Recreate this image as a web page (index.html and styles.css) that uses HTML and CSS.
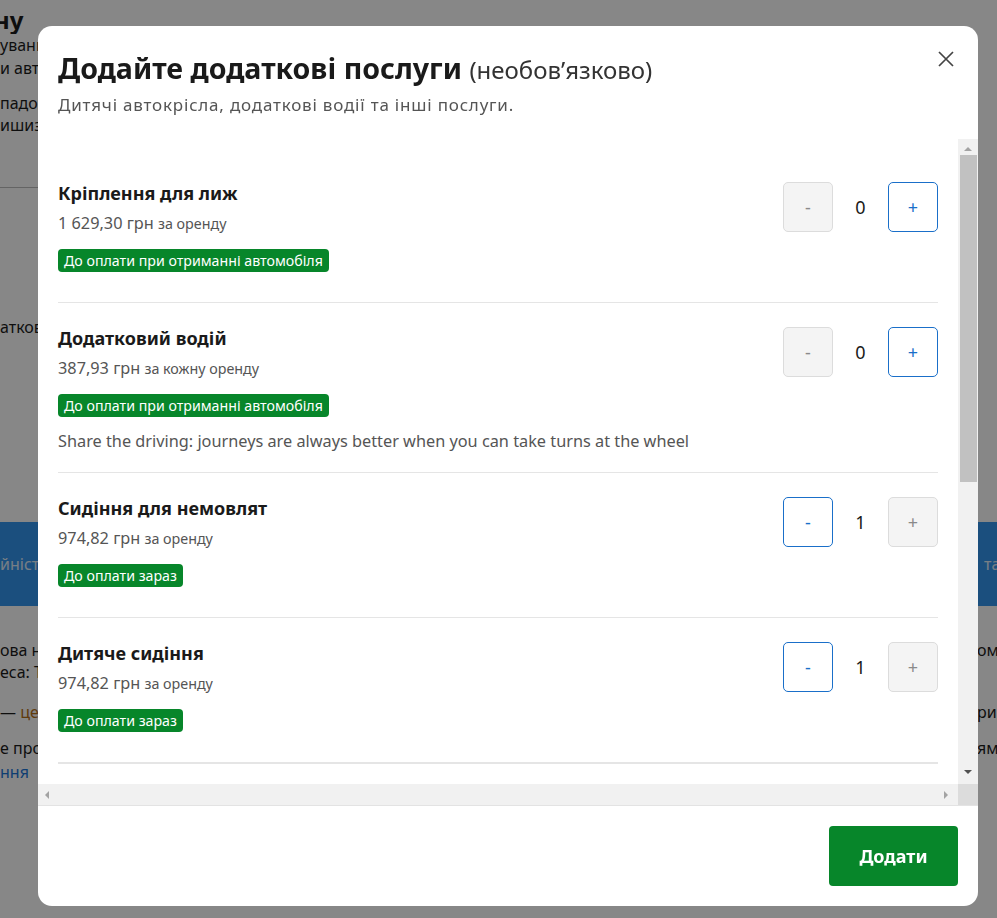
FILE: index.html
```html
<!DOCTYPE html>
<html lang="uk">
<head>
<meta charset="utf-8">
<title>Додаткові послуги</title>
<link rel="stylesheet" href="styles.css">
</head>
<body>
<div class="bg">
  <div class="bg-row bg-head"><div class="bg-l">ну</div><div class="bg-r"></div></div>
  <div class="bg-row bg-p1"><div class="bg-l">ування<br>и авто</div><div class="bg-r"></div></div>
  <div class="bg-row bg-p2"><div class="bg-l">падо<br>ишизо</div><div class="bg-r"></div></div>
  <div class="bg-hr"></div>
  <div class="bg-row bg-p3"><div class="bg-l">атков</div><div class="bg-r"></div></div>
  <div class="bg-row bg-band"><div class="bg-l">йніст</div><div class="bg-r bg-r-band">та</div></div>
  <div class="bg-row bg-p4"><div class="bg-l">ова н<br>еса: Т</div><div class="bg-r">оме</div></div>
  <div class="bg-row bg-p5"><div class="bg-l">— <span class="bg-accent">це</span></div><div class="bg-r">ри</div></div>
  <div class="bg-row bg-p6"><div class="bg-l">е про<br><span class="bg-link">ння</span></div><div class="bg-r">ямз</div></div>
</div>
<div class="overlay"></div>
<div class="modal" role="dialog">
  <div class="modal-head">
    <h2 class="modal-title">Додайте додаткові послуги <span class="opt">(необов’язково)</span></h2>
    <p class="modal-sub">Дитячі автокрісла, додаткові водії та інші послуги.</p>
    <button class="close" aria-label="Закрити">
      <svg width="16" height="16" viewBox="0 0 16 16"><path d="M1 1L15 15M15 1L1 15" stroke="#444" stroke-width="1.7" fill="none"/></svg>
    </button>
  </div>
  <div class="scroller">
    <div class="scroll-content">
      <div class="item">
        <div class="info">
          <div class="name">Кріплення для лиж</div>
          <div class="price">1 629,30 грн <small>за оренду</small></div>
          <span class="badge">До оплати при отриманні автомобіля</span>
        </div>
        <div class="stepper">
          <button class="step off">-</button><span class="count">0</span><button class="step on">+</button>
        </div>
      </div>
      <div class="item">
        <div class="info">
          <div class="name">Додатковий водій</div>
          <div class="price">387,93 грн <small>за кожну оренду</small></div>
          <span class="badge">До оплати при отриманні автомобіля</span>
          <p class="desc">Share the driving: journeys are always better when you can take turns at the wheel</p>
        </div>
        <div class="stepper">
          <button class="step off">-</button><span class="count">0</span><button class="step on">+</button>
        </div>
      </div>
      <div class="item">
        <div class="info">
          <div class="name">Сидіння для немовлят</div>
          <div class="price">974,82 грн <small>за оренду</small></div>
          <span class="badge">До оплати зараз</span>
        </div>
        <div class="stepper">
          <button class="step on">-</button><span class="count">1</span><button class="step off">+</button>
        </div>
      </div>
      <div class="item">
        <div class="info">
          <div class="name">Дитяче сидіння</div>
          <div class="price">974,82 грн <small>за оренду</small></div>
          <span class="badge">До оплати зараз</span>
        </div>
        <div class="stepper">
          <button class="step on">-</button><span class="count">1</span><button class="step off">+</button>
        </div>
      </div>
      <div class="item item-next">
        <div class="info">
          <div class="name">Бустер</div>
          <div class="price">487,41 грн <small>за оренду</small></div>
        </div>
      </div>
    </div>
    <div class="vbar">
      <span class="arr arr-up"></span>
      <span class="thumb"></span>
      <span class="arr arr-down"></span>
    </div>
    <div class="hbar">
      <span class="arr arr-left"></span>
      <span class="arr arr-right"></span>
    </div>
    <div class="corner"></div>
  </div>
  <div class="modal-foot">
    <button class="primary">Додати</button>
  </div>
</div>
</body>
</html>
```
FILE: styles.css
```css
* { box-sizing: border-box; }
html, body { margin: 0; padding: 0; }
body {
  width: 997px;
  height: 918px;
  overflow: hidden;
  font-family: "Noto Sans", "Open Sans", sans-serif;
  background: #fff;
  color: #1a1a1a;
}

/* background page */
.bg { font-size: 16px; color: #1c1c1c; }
.bg-row {
  display: grid;
  grid-template-columns: 976px 1fr;
  white-space: nowrap;
}
.bg-l, .bg-r { overflow: hidden; }
.bg-r { padding-left: 1px; }
.bg-r-band { padding-left: 8px; }
.bg-head { height: 34px; padding-top: 5px; font-size: 24px; font-weight: 700; line-height: 29px; text-indent: -6px; }
.bg-p1 { margin-top: 0; line-height: 23px; }
.bg-p2 { margin-top: 12px; line-height: 22px; }
.bg-hr { margin-top: 51px; height: 1px; background: #bdbdbd; width: 976px; }
.bg-p3 { margin-top: 128px; line-height: 22px; }
.bg-band {
  margin-top: 184px;
  height: 84px;
  line-height: 84px;
  background: #3396ee;
  color: #ffffff;
}
.bg-band .bg-l, .bg-band .bg-r { opacity: 0.85; }
.bg-p4 { margin-top: 33px; line-height: 22px; }
.bg-p5 { margin-top: 18px; line-height: 22px; }
.bg-accent { color: #b4701a; }
.bg-p6 { margin-top: 13px; line-height: 24px; }
.bg-link { color: #1c76d8; }

.overlay {
  position: fixed;
  inset: 0;
  background: rgba(0, 0, 0, 0.47);
}

/* modal */
.modal {
  position: fixed;
  left: 38px;
  top: 26px;
  width: 940px;
  height: 880px;
  background: #fff;
  border-radius: 14px;
  display: flex;
  flex-direction: column;
  overflow: hidden;
}
.modal-head {
  position: relative;
  padding: 24px 20px 22px;
}
.modal-title {
  margin: 0;
  font-size: 28.6px;
  line-height: 36px;
  font-weight: 700;
  color: #1a1a1a;
}
.opt { font-size: 24px; font-weight: 400; color: #333; }
.modal-sub {
  margin: 5px 0 0;
  font-size: 17px;
  letter-spacing: 0.8px;
  line-height: 24px;
  color: #555;
}
.close {
  position: absolute;
  top: 21px;
  right: 20px;
  width: 24px;
  height: 24px;
  padding: 0;
  border: 0;
  background: transparent;
  display: flex;
  align-items: center;
  justify-content: center;
}

.scroller {
  flex: 1;
  display: grid;
  grid-template-columns: 1fr 20px;
  grid-template-rows: 1fr 21px;
  min-height: 0;
}
.scroll-content {
  overflow: hidden;
  padding: 19px 20px 0;
}
.item {
  display: flex;
  justify-content: space-between;
  align-items: flex-start;
  padding: 24px 0 20px;
  border-bottom: 1px solid #e5e5e5;
}
.item-next { border-top: 1px solid #e5e5e5; }
.name { font-size: 18px; line-height: 22px; font-weight: 700; color: #1a1a1a; }
.price { margin-top: 8px; font-size: 16.3px; line-height: 22px; color: #555; }
.price small { font-size: 14.3px; }
.badge {
  display: block;
  width: fit-content;
  margin-top: 14px;
  margin-bottom: 10px;
  height: 23px;
  line-height: 23px;
  padding: 0 6px;
  border-radius: 4px;
  background: #07862a;
  color: #fff;
  font-size: 14.2px;
}
.desc { margin: 13px 0 0; font-size: 16.3px; line-height: 22px; color: #555; }
.stepper { display: flex; align-items: center; }
.step {
  width: 50px;
  height: 50px;
  border-radius: 5px;
  font-family: inherit;
  font-size: 18px;
  padding: 0;
}
.step.on { background: #fff; border: 1px solid #1a6fc9; color: #1a6fc9; }
.step.off { background: #f4f4f4; border: 1px solid #dcdcdc; color: #8a8a8a; }
.count { width: 55px; text-align: center; font-size: 18px; color: #1a1a1a; }

.vbar {
  background: #f1f1f1;
  display: flex;
  flex-direction: column;
  align-items: center;
  padding: 0 1px 0 1px;
}
.thumb {
  width: 17px;
  height: 327px;
  background: #c1c1c1;
  margin-top: 4px;
}
.arr { display: block; width: 0; height: 0; }
.arr-up {
  margin-top: 8px;
  border-left: 4px solid transparent;
  border-right: 4px solid transparent;
  border-bottom: 4px solid #a3a3a3;
}
.arr-down {
  margin-top: auto;
  margin-bottom: 10px;
  border-left: 4px solid transparent;
  border-right: 4px solid transparent;
  border-top: 4px solid #505050;
}
.hbar {
  background: #f1f1f1;
  display: flex;
  align-items: center;
  justify-content: space-between;
  padding: 0 10px 0 7px;
}
.arr-left {
  border-top: 4px solid transparent;
  border-bottom: 4px solid transparent;
  border-right: 4px solid #a3a3a3;
}
.arr-right {
  border-top: 4px solid transparent;
  border-bottom: 4px solid transparent;
  border-left: 4px solid #a3a3a3;
}
.corner { background: #dcdcdc; }

.modal-foot {
  border-top: 1px solid #e3e3e3;
  padding: 20px;
  display: flex;
  justify-content: flex-end;
}
.primary {
  width: 129px;
  height: 60px;
  border: 0;
  border-radius: 4px;
  background: #07862a;
  color: #fff;
  font-family: inherit;
  font-size: 18px;
  font-weight: 700;
}
```
